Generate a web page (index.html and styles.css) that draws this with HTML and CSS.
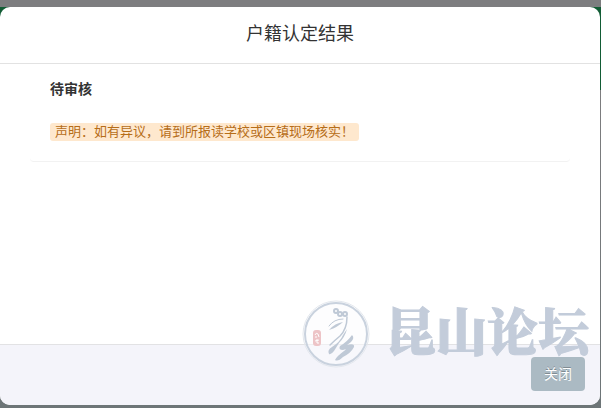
FILE: index.html
```
<!DOCTYPE html>
<html lang="zh-CN">
<head>
    <meta charset="UTF-8">
    <meta name="viewport" content="width=device-width, initial-scale=1.0">
    <title>户籍认定结果</title>

    <link rel="stylesheet" href="styles.css">
</head>
<body>

<div class="modal" role="dialog" aria-labelledby="modal-title">
    <header class="modal-header">
        <h1 id="modal-title">户籍认定结果</h1>
    </header>

    <main class="modal-body">
        <div class="result">
            <h2>待审核</h2>
            <p><span class="label">声明：如有异议，请到所报读学校或区镇现场核实！</span></p>
        </div>
    </main>

    <footer class="modal-footer">
        <button type="button" class="btn">关闭</button>
    </footer>

    <!-- forum watermark -->
    <div class="watermark">
        <svg class="seal" viewBox="0 0 70 70" width="70" height="70" aria-hidden="true">
            <circle cx="35" cy="35" r="33" fill="none" stroke="#e4e8ee" stroke-width="1"/>
            <circle cx="35" cy="35" r="31" fill="#fbfbfd" fill-opacity=".5" stroke="#c9d2de" stroke-width="2"/>
            <g fill="none" stroke="#bfc9d6" stroke-linecap="round">
                <circle cx="35" cy="12" r="2" stroke-width="2"/>
                <circle cx="39" cy="15" r="2" stroke-width="2"/>
                <circle cx="44" cy="15" r="2" stroke-width="2"/>
                <path d="M46 18 Q46 30 39 37 Q33 42 29 46" stroke-width="1.5"/>
                <path d="M28 27 Q33 20 42 20" stroke-width="1"/>
            </g>
            <g fill="#bfc9d6">
                <path d="M28 31 Q34 24 42 23 Q37 28 28 31Z"/>
                <path d="M46 30 Q44 38 38 44 L33 52 Q30 56 28 55 Q26 51 31 48 Q39 43 42 36 Z"/>
                <path d="M51 36 Q54 39 50 43 L46 46 Q54 44 53 48 Q50 54 42 58 Q37 63 34 61 Q36 57 43 52 Q47 49 42 51 Q37 51 39 47 Q46 43 51 36Z"/>
            </g>
            <rect x="12" y="31" width="8" height="16" rx="3" fill="#edc4c7"/>
            <path d="M14 36 Q15 33 17 35 L18 38 M14 38 H16 M14 42 L18 41 M16 40 V44 H18" fill="none" stroke="#fff" stroke-width="1"/>
        </svg>
        <span class="watermark-text">昆山论坛</span>
    </div>
</div>

</body>
</html>
```

FILE: styles.css
```
*{
    margin: 0;
    padding: 0;
    box-sizing: border-box;
}

body{
    display: flex;
    min-height: 100vh;
    padding: 7px 1px 3px 0;
    font-family: "Liberation Sans", "Noto Sans CJK SC", sans-serif;
    font-size: 14px;
    color: #333;
    background: linear-gradient(#7d7d7f 7px, #125c35 7px, #125c35 90px, #7d7d7f 90px, #6d7577);
}

.modal{
    position: relative;
    display: flex;
    flex-direction: column;
    flex: 1;
    overflow: hidden;
    border-radius: 10px;
    background-color: #fff;
}

.modal-header{
    padding: 14px 15px 16px;
    border-bottom: 1px solid #e2e2e2;
    text-align: center;
}

.modal-header h1{
    font-size: 18px;
    font-weight: normal;
    line-height: 26px;
}

.modal-body{
    flex: 1;
    padding: 0 30px;
}

.result{
    padding: 13px 20px 20px;
    border-bottom: 1px solid #f2f2f2;
    border-radius: 4px;
}

.result h2{
    margin-bottom: 22px;
    font-size: 14px;
    line-height: 24px;
}

.result p{
    display: flex;
    line-height: 18px;
}

.label{
    padding: 0 5px;
    border-radius: 3px;
    font-size: 13px;
    color: #b66d18;
    background-color: #fee8ce;
}

.modal-footer{
    display: flex;
    justify-content: flex-end;
    padding: 12px 15px 14px;
    border-top: 1px solid #e2e2e4;
    background-color: #f4f4fa;
}

.btn{
    padding: 6px 13px;
    border: none;
    border-radius: 4px;
    font-family: inherit;
    font-size: 14px;
    line-height: 22px;
    color: #fff;
    text-shadow: 0 -1px 0 rgba(0, 0, 0, 0.25);
    background-color: #abbac3;
}

.btn:hover{
    cursor: pointer;
    background-color: #8b9aa3;
}

/* lies over the body and the footer */
.watermark{
    position: absolute;
    right: 11px;
    bottom: 36px;
    display: flex;
    align-items: flex-start;
    gap: 14px;
    pointer-events: none;
}

.watermark-text{
    font-family: "Noto Serif CJK SC", "Noto Sans CJK SC", serif;
    font-size: 51px;
    font-weight: 900;
    line-height: 60px;
    color: #c3ccda;
    -webkit-text-stroke: 1px #c3ccda;
}
```
